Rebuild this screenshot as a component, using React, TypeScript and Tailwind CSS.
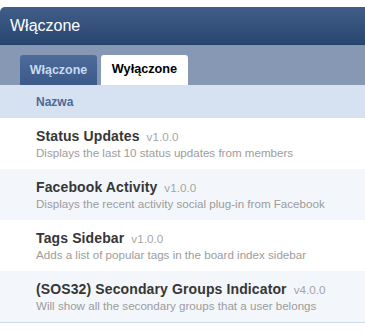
import React from 'react';

const extensions = [
  { name: 'Status Updates', version: 'v1.0.0', desc: 'Displays the last 10 status updates from members' },
  { name: 'Facebook Activity', version: 'v1.0.0', desc: 'Displays the recent activity social plug-in from Facebook' },
  { name: 'Tags Sidebar', version: 'v1.0.0', desc: 'Adds a list of popular tags in the board index sidebar' },
  { name: '(SOS32) Secondary Groups Indicator', version: 'v4.0.0', desc: 'Will show all the secondary groups that a user belongs' },
];

export default function App() {
  return (
    <div className="w-[365px] h-[333px] overflow-hidden bg-white pt-[7px] font-['Liberation_Sans',Arial,sans-serif]">
      {/* Panel header */}
      <div className="h-[38px] rounded-tl-[5px] bg-gradient-to-b from-[#415e89] to-[#284670] border-b border-[#22406a] flex items-center pl-[10px]">
        <span className="text-[16px] text-white">Włączone</span>
      </div>

      {/* Tabs */}
      <div className="h-[40px] bg-[#8798b5] flex items-end pl-[20px] gap-[4px]">
        <div className="w-[77px] h-[30px] rounded-t-[3px] bg-gradient-to-b from-[#4d6c9c] to-[#3b5a89] flex items-center justify-center">
          <span className="text-[12.5px] font-bold text-[#c8daf2]">Włączone</span>
        </div>
        <div className="w-[87px] h-[30px] rounded-t-[3px] bg-white flex items-center justify-center">
          <span className="text-[12.7px] font-bold text-black">Wyłączone</span>
        </div>
      </div>

      {/* Column header */}
      <div className="h-[33px] bg-[#d6e1f1] flex items-center pl-[36px]">
        <span className="text-[12px] font-bold text-[#4c6a96]">Nazwa</span>
      </div>

      {/* Rows */}
      <div className="border-b border-[#cfdcec]">
        {extensions.map((ext, i) => (
          <div
            key={ext.name}
            className={i % 2 === 0 ? 'h-[51px] bg-white pl-[36px] pt-[10px]' : 'h-[51px] bg-[#f3f6fa] pl-[36px] pt-[10px]'}
          >
            <div className="flex items-baseline gap-[7px] leading-[17px]">
              <span className="text-[14px] font-bold text-[#363636] tracking-[0.12px]">{ext.name}</span>
              <span className="text-[11.7px] text-[#a6a6a6]">{ext.version}</span>
            </div>
            <div className="text-[11.6px] leading-[15px] text-[#9c9c9c]">{ext.desc}</div>
          </div>
        ))}
      </div>
    </div>
  );
}
